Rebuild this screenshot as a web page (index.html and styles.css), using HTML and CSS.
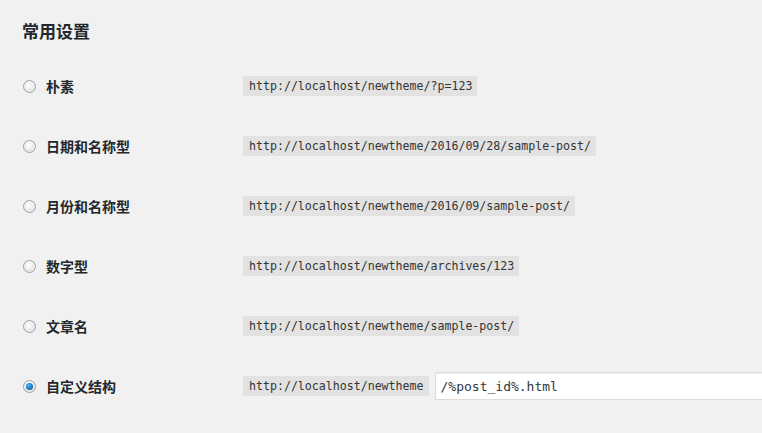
FILE: index.html
```html
<!DOCTYPE html>
<html lang="zh-CN">
<head>
<meta charset="utf-8">
<title>常用设置</title>
<link rel="stylesheet" href="styles.css">
</head>
<body>
<div class="wrap">
  <h2 class="title">常用设置</h2>
  <div class="rows">
    <div class="row">
      <label class="opt"><span class="radio"></span><span class="name">朴素</span></label>
      <div class="val"><code>http://localhost/newtheme/?p=123</code></div>
    </div>
    <div class="row">
      <label class="opt"><span class="radio"></span><span class="name">日期和名称型</span></label>
      <div class="val"><code>http://localhost/newtheme/2016/09/28/sample-post/</code></div>
    </div>
    <div class="row">
      <label class="opt"><span class="radio"></span><span class="name">月份和名称型</span></label>
      <div class="val"><code>http://localhost/newtheme/2016/09/sample-post/</code></div>
    </div>
    <div class="row">
      <label class="opt"><span class="radio"></span><span class="name">数字型</span></label>
      <div class="val"><code>http://localhost/newtheme/archives/123</code></div>
    </div>
    <div class="row">
      <label class="opt"><span class="radio"></span><span class="name">文章名</span></label>
      <div class="val"><code>http://localhost/newtheme/sample-post/</code></div>
    </div>
    <div class="row">
      <label class="opt"><span class="radio checked"></span><span class="name">自定义结构</span></label>
      <div class="val"><code>http://localhost/newtheme</code><input class="struct" type="text" value="/%post_id%.html"></div>
    </div>
  </div>
</div>
</body>
</html>
```

FILE: styles.css
```css
html, body {
  margin: 0;
  padding: 0;
  background: #f1f1f1;
  overflow: hidden;
}
body {
  font-family: "Noto Sans CJK SC", "Noto Sans", sans-serif;
  color: #23282d;
}
.wrap {
  padding-left: 22px;
}
.title {
  margin: 0 0 18px;
  padding-top: 19px;
  height: 38px;
  box-sizing: border-box;
  font-size: 17px;
  line-height: 24px;
  font-weight: 700;
  color: #23282d;
}
.rows {
  display: flex;
  flex-direction: column;
}
.row {
  display: flex;
  align-items: center;
  height: 60px;
}
.opt {
  width: 221px;
  display: flex;
  align-items: center;
  flex-shrink: 0;
}
.radio {
  width: 11px;
  height: 11px;
  border-radius: 50%;
  border: 1px solid #a0a0a0;
  background: radial-gradient(circle at 45% 40%, #ffffff 0%, #ececec 45%, #c8c8c8 100%);
  box-shadow: inset 0 0 0 1px rgba(255,255,255,0.5);
  display: flex;
  align-items: center;
  justify-content: center;
  margin-left: 1px;
}
.radio.checked::after {
  content: "";
  width: 7px;
  height: 7px;
  border-radius: 50%;
  background: radial-gradient(circle at 40% 35%, #5cb8f0 0%, #1a7fc8 50%, #0c4f8c 100%);
}
.name {
  margin-left: 10px;
  font-size: 14px;
  font-weight: 700;
  line-height: 20px;
  color: #23282d;
}
.val {
  display: flex;
  align-items: center;
}
code {
  font-family: "DejaVu Sans Mono", monospace;
  font-size: 11.6px;
  line-height: 20px;
  height: 20px;
  padding: 0 5px 0 6px;
  background: #e2e2e2;
  color: #333;
  white-space: nowrap;
}
.struct {
  margin-left: 6px;
  width: 328px;
  height: 28px;
  box-sizing: border-box;
  border: 1px solid #dddddd;
  border-right: 0;
  box-shadow: inset 0 1px 2px rgba(0,0,0,0.07);
  background: #fff;
  padding: 0 5px;
  font-family: "DejaVu Sans Mono", monospace;
  font-size: 13px;
  color: #32373c;
  outline: none;
}
```
